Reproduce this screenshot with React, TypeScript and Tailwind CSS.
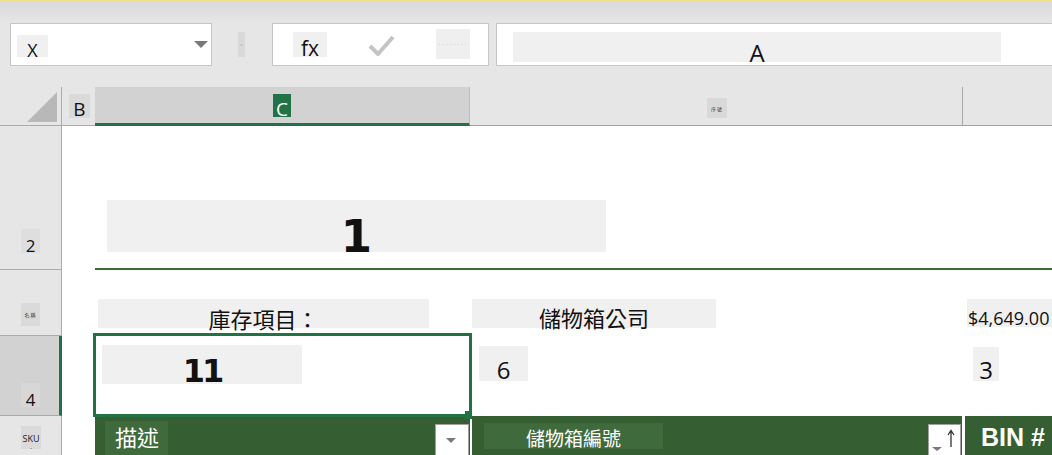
import React from 'react';

const ui = "font-['Open_Sans','Noto_Sans_CJK_TC',sans-serif]";
const cjk = "font-['Noto_Sans_CJK_TC','Noto_Sans',sans-serif]";
const dv = "font-['DejaVu_Sans',sans-serif]";
const boldSans = "font-['Liberation_Sans','Noto_Sans_CJK_TC',sans-serif]";

function Tiny({ text }: { text: string }) {
  return <span className={`${cjk} text-[5px] leading-none text-[#333] tracking-[1px]`}>{text}</span>;
}

function FormulaBar() {
  return (
    <div className="flex h-[43px] items-stretch">
      {/* name box */}
      <div className="ml-[10px] flex w-[202px] items-start border border-[#c6c6c6] bg-white">
        <div className={`${ui} ml-[6px] mt-[11px] flex h-[22px] w-[31px] justify-center bg-[#f0f0f0] pt-[6px] text-[18px] leading-none text-[#111]`}>
          X
        </div>
        <svg className="ml-auto mr-[3px] mt-[17px]" width="14" height="7" viewBox="0 0 14 7">
          <polygon points="0,0 14,0 7,7" fill="#7a7a7a" />
        </svg>
      </div>

      {/* gripper */}
      <div className="ml-[26px] mt-[9px] flex h-[25px] w-[7px] items-center justify-center bg-[#d9d9d9]">
        <span className="text-[4px] leading-none text-[#666]">::</span>
      </div>

      {/* cancel / enter / fx */}
      <div className="ml-[27px] flex w-[217px] items-start border border-[#c6c6c6] bg-white">
        <div className={`${ui} ml-[20px] mt-[8px] flex h-[25px] w-[34px] justify-center bg-[#f0f0f0] pt-[6px] text-[21px] leading-none text-[#111]`}>
          fx
        </div>
        <svg className="ml-[41px] mt-[10px]" width="27" height="22" viewBox="0 0 27 22">
          <path d="M2 12 L10 20 L25 3" fill="none" stroke="#c4c4c4" strokeWidth="4" strokeLinejoin="round" />
        </svg>
        <div className="ml-[41px] mt-[5px] flex h-[30px] w-[34px] items-center justify-center bg-[#efefef]">
          <span className="text-[3px] leading-none tracking-[1px] text-[#444]">- - - - - - - -</span>
        </div>
      </div>

      {/* formula input */}
      <div className="-mr-[10px] ml-[7px] flex flex-1 items-start border border-[#c6c6c6] bg-white">
        <div className={`${ui} ml-[16px] mt-[8px] flex h-[30px] w-[488px] justify-center bg-[#f0f0f0] pt-[9px] text-[24px] leading-none text-[#111]`}>
          A
        </div>
      </div>
    </div>
  );
}

function ColumnHeaders() {
  return (
    <div className="flex h-[39px]">
      <div className="flex w-[62px] items-start border-r border-b border-[#ababab]">
        <svg className="ml-[27px] mt-[5px]" width="30" height="30" viewBox="0 0 30 30">
          <polygon points="30,0 30,30 0,30" fill="#b8b8b8" />
        </svg>
      </div>
      <div className="flex w-[33px] items-start border-b border-[#ababab]">
        <div className={`${ui} ml-[7px] mt-[7px] flex h-[24px] w-[21px] justify-center bg-[#dadada] pt-[6px] text-[19px] leading-none text-[#111]`}>
          B
        </div>
      </div>
      <div className="flex w-[375px] items-start justify-center border-r border-b-[3px] border-r-[#bdbdbd] border-b-[#217346] bg-[#d2d2d2]">
        <div className={`${ui} mt-[7px] flex h-[23px] w-[18px] justify-center bg-[#217346] pt-[6px] text-[19px] leading-none text-white`}>
          C
        </div>
      </div>
      <div className="flex w-[493px] items-start border-r border-b border-r-[#a8a8a8] border-b-[#a0a0a0]">
        <div className="ml-[237px] mt-[11px] flex h-[20px] w-[20px] items-center justify-center bg-[#d9d9d9]">
          <Tiny text="序號" />
        </div>
      </div>
      <div className="flex-1 border-b border-[#a0a0a0]" />
    </div>
  );
}

function RowHead({
  h, mb, label, small, selected,
}: { h: string; mb: string; label: string; small?: boolean; selected?: boolean }) {
  return (
    <div
      className={`${h} flex w-[62px] shrink-0 items-end border-b border-b-[#ababab] ${
        selected ? 'border-r-[3px] border-r-[#217346] bg-[#d2d2d2]' : 'border-r border-r-[#ababab] bg-[#e6e6e6]'
      }`}
    >
      {small ? (
        <div className={`${mb} ml-[21px] flex h-[23px] w-[19px] items-center justify-center bg-[#dadada]`}>
          <Tiny text={label} />
        </div>
      ) : (
        <div className={`${ui} ${mb} ml-[21px] flex h-[24px] w-[19px] justify-center ${selected ? 'bg-[#d7d7d7]' : 'bg-[#dedede]'} pt-[8px] text-[17px] leading-none text-[#111]`}>
          {label}
        </div>
      )}
    </div>
  );
}

export default function App() {
  return (
    <div className={`${ui} h-[455px] w-[1052px] overflow-hidden bg-[#e6e6e6]`}>
      <div className="h-[2px] bg-[#ece28c]" />
      <div className="h-[21px] bg-linear-to-b from-[#dadada] to-[#e6e6e6]" />
      <FormulaBar />
      <div className="h-[21px]" />
      <ColumnHeaders />

      {/* row 2 */}
      <div className="flex h-[144px]">
        <RowHead h="h-[144px]" mb="mb-[16px]" label="2" />
        <div className="w-[33px] bg-white" />
        <div className="flex flex-1 items-start border-b-2 border-[#3b6a37] bg-white">
          <div className={`${dv} ml-[12px] mt-[74px] flex h-[52px] w-[499px] justify-center bg-[#f0f0f0] pt-[14px] text-[45px] font-bold leading-none text-[#111]`}>
            1
          </div>
        </div>
      </div>

      {/* row 3 */}
      <div className="flex h-[66px]">
        <RowHead h="h-[66px]" mb="mb-[9px]" label="名稱" small />
        <div className="flex flex-1 items-start bg-white">
          <div className="w-[33px]" />
          <div className="flex w-[375px] items-start">
            <div className={`${cjk} ml-[3px] mt-[29px] flex h-[29px] w-[331px] justify-center bg-[#f0f0f0] pt-[8px] text-[22px] leading-none text-[#111]`}>
              庫存項目：
            </div>
          </div>
          <div className="flex w-[493px] items-start">
            <div className={`${cjk} ml-[2px] mt-[29px] flex h-[29px] w-[244px] justify-center bg-[#f0f0f0] pt-[7px] text-[22px] leading-none text-[#111]`}>
              儲物箱公司
            </div>
          </div>
          <div className="flex flex-1 items-start">
            <div className={`${ui} ml-[4px] mt-[29px] flex h-[28px] flex-1 bg-[#f0f0f0] pl-[1px] pt-[10px] text-[18px] leading-none whitespace-nowrap text-[#111]`}>
              $4,649.00
            </div>
          </div>
        </div>
      </div>

      {/* row 4 */}
      <div className="flex h-[80px]">
        <RowHead h="h-[80px]" mb="mb-[8px]" label="4" selected />
        <div className="flex flex-1 items-start bg-white">
          <div className="w-[33px]" />
          <div className="relative flex h-[80px] w-[375px] items-start">
            <div className={`${dv} ml-[7px] mt-[9px] flex h-[39px] w-[200px] justify-center bg-[#f0f0f0] pt-[10px] text-[32px] font-bold leading-none tracking-[-3px] text-[#111]`}>
              11
            </div>
            <div className="pointer-events-none absolute -left-[2px] -top-[3px] z-10 h-[84px] w-[379px] border-[3px] border-[#217346]">
              <div className="absolute -bottom-[5px] -right-[3px] h-[8px] w-[7px] bg-[#217346]" />
            </div>
          </div>
          <div className="flex w-[493px] items-start">
            <div className={`${ui} ml-[9px] mt-[10px] flex h-[35px] w-[49px] justify-center bg-[#f0f0f0] pt-[12px] text-[24px] leading-none text-[#111]`}>
              6
            </div>
          </div>
          <div className="flex flex-1 items-start">
            <div className={`${ui} ml-[10px] mt-[11px] flex h-[34px] w-[26px] justify-center bg-[#f0f0f0] pt-[11px] text-[24px] leading-none text-[#111]`}>
              3
            </div>
          </div>
        </div>
      </div>

      {/* row 5: table header */}
      <div className="flex h-[40px]">
        <div className="flex h-[40px] w-[62px] shrink-0 items-start border-r border-r-[#ababab] bg-[#e6e6e6]">
          <div className={`${ui} ml-[21px] mt-[10px] flex h-[23px] w-[20px] flex-col items-center bg-[#dadada] pt-[8px] text-[9px] leading-none text-[#222]`}>
            SKU
            <span className="mt-[2px] text-[6px] leading-none">-</span>
          </div>
        </div>
        <div className="flex flex-1 items-stretch bg-white">
          <div className="w-[33px]" />
          <div className="flex w-[375px] items-start bg-[#355f32]">
            <div className={`${cjk} ml-[10px] mt-[5px] h-[40px] w-[63px] bg-[#3f6a3c] pl-[10px] pt-[4px] text-[22px] leading-none text-white`}>
              描述
            </div>
            <div className="ml-auto mr-[1px] mt-[8px] h-[40px] w-[34px] border border-[#a0a0a0] bg-white">
              <svg width="32" height="24" viewBox="0 0 32 24">
                <polygon points="10,13 20,13 15,18" fill="#7a7a7a" />
              </svg>
            </div>
          </div>
          <div className="flex w-[492px] items-start border-l-2 border-white bg-[#355f32]">
            <div className={`${cjk} ml-[12px] mt-[7px] flex h-[26px] w-[179px] justify-center bg-[#3f6a3c] pt-[5px] text-[19px] leading-none text-white`}>
              儲物箱編號
            </div>
            <div className="ml-auto mr-[1px] mt-[8px] h-[40px] w-[33px] border border-[#a0a0a0] bg-white">
              <svg width="31" height="30" viewBox="0 0 31 30">
                <polygon points="3,22 13,22 8,26" fill="#7a7a7a" />
                <path d="M22 6 V22 M19 10 L22 5.5 L25 10" fill="none" stroke="#333" strokeWidth="1.3" />
              </svg>
            </div>
          </div>
          <div className={`${boldSans} flex-1 border-l-[3px] border-white bg-[#355f32] pl-[16px] pt-[9px] text-[25px] font-bold leading-none whitespace-nowrap text-white`}>
            BIN #
          </div>
        </div>
      </div>
    </div>
  );
}
